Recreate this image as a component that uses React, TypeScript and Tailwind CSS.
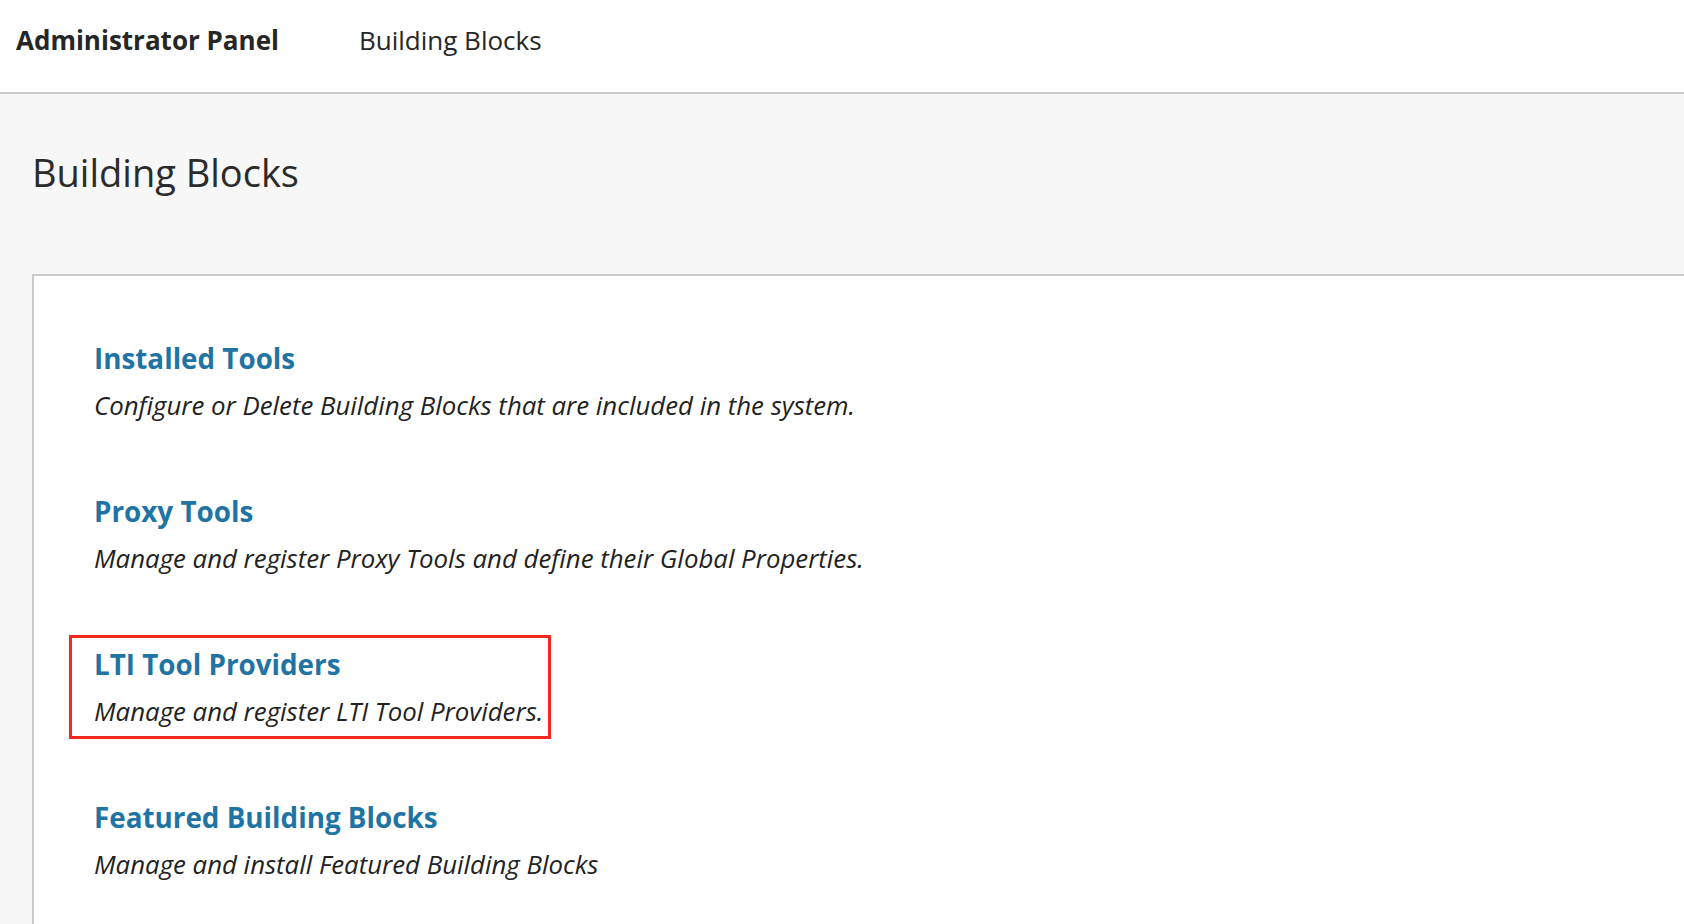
const tools = [
  {
    id: 'installed',
    title: 'Installed Tools',
    description: 'Configure or Delete Building Blocks that are included in the system.',
    highlight: false,
  },
  {
    id: 'proxy',
    title: 'Proxy Tools',
    description: 'Manage and register Proxy Tools and define their Global Properties.',
    highlight: false,
  },
  {
    id: 'lti',
    title: 'LTI Tool Providers',
    description: 'Manage and register LTI Tool Providers.',
    highlight: true,
  },
  {
    id: 'featured',
    title: 'Featured Building Blocks',
    description: 'Manage and install Featured Building Blocks',
    highlight: false,
  },
];

function ToolEntry({ title, description }: { title: string; description: string }) {
  return (
    <>
      <a href="#" className="block text-[27.8px] leading-[40px] font-bold text-[#1f74a3]">
        {title}
      </a>
      <p className="mt-[11px] text-[25.8px] leading-[32px] italic text-[#222]">
        {description}
      </p>
    </>
  );
}

export default function App() {
  return (
    <div className="min-h-screen bg-[#f7f7f7] font-['Open_Sans',sans-serif] text-[#262626]">
      <header className="flex h-[94px] items-start gap-[80px] border-b-2 border-[#cbcbcb] bg-white px-4 pt-[22px]">
        <span className="text-[26px] leading-[36px] font-bold">Administrator Panel</span>
        <span className="text-[26px] leading-[36px]">Building Blocks</span>
      </header>

      <h1 className="mt-[52px] ml-[32px] text-[38px] leading-[52px] font-normal text-[#2b2b2b]">
        Building Blocks
      </h1>

      <div className="mt-[76px] ml-[32px] min-h-[650px] border-t-2 border-l-2 border-[#cbcbcb] bg-white pt-[62px] pl-[60px]">
        <div className="flex flex-col gap-[70px] pb-10">
          {tools.map((tool) =>
            tool.highlight ? (
              <div
                key={tool.id}
                className="-mt-[9px] -mb-[12px] -ml-[25px] w-fit border-[3px] border-[#f5281e] pt-[6px] pr-[5px] pb-[9px] pl-[22px]"
              >
                <ToolEntry title={tool.title} description={tool.description} />
              </div>
            ) : (
              <div key={tool.id}>
                <ToolEntry title={tool.title} description={tool.description} />
              </div>
            )
          )}
        </div>
      </div>
    </div>
  );
}
